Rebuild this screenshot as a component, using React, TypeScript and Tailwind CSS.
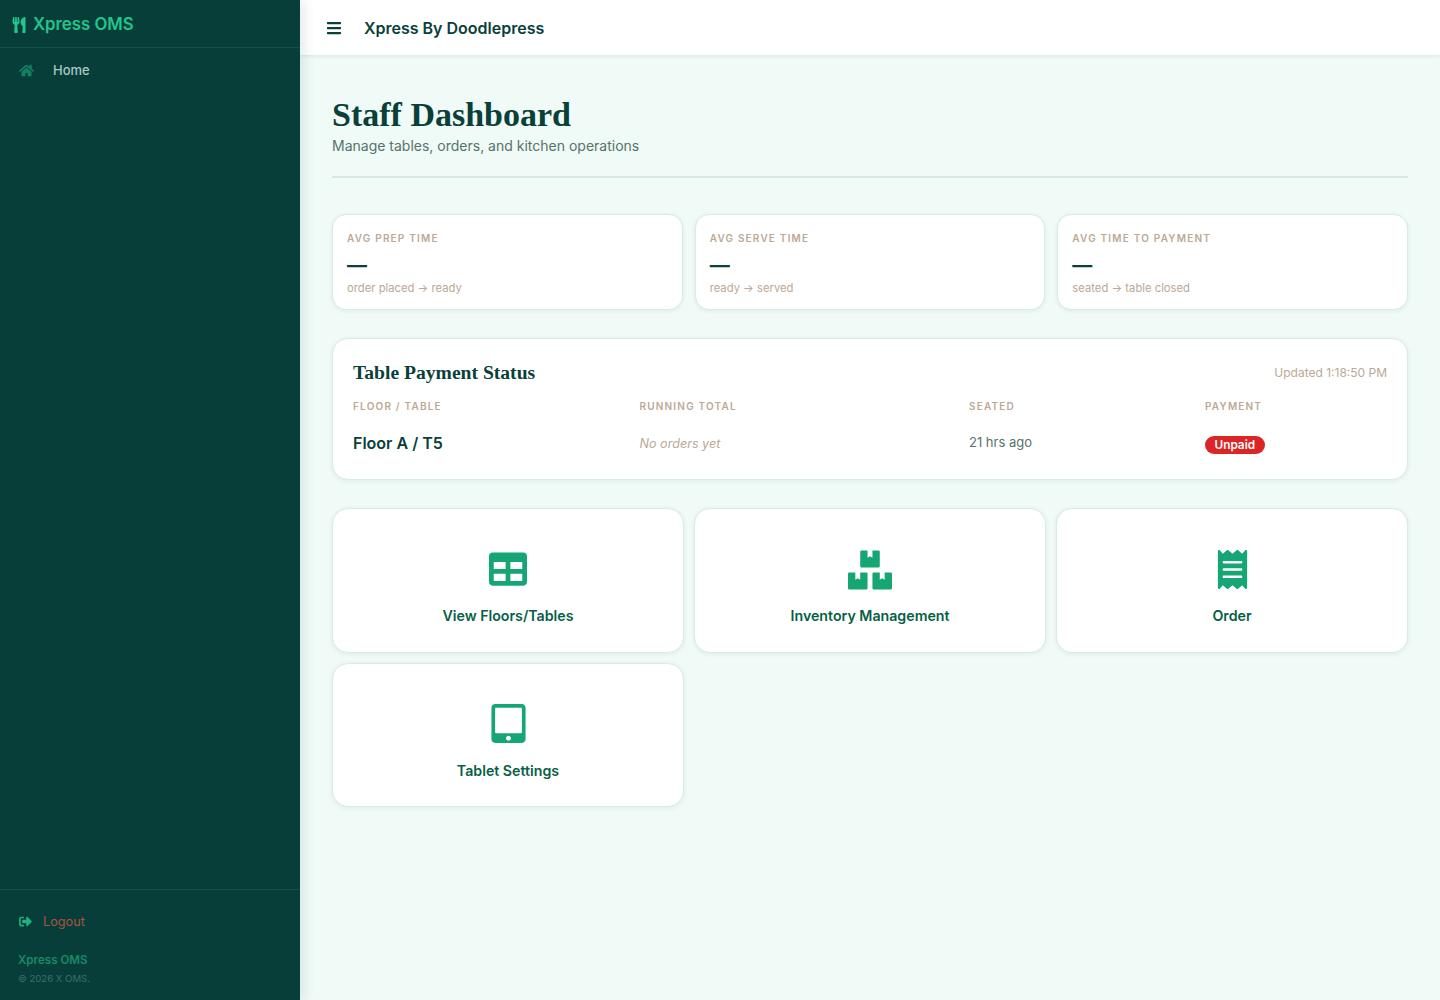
import { FaBars, FaBoxes, FaHome, FaReceipt, FaSignOutAlt, FaTable, FaTabletAlt, FaUtensils } from "react-icons/fa";
import type { IconType } from "react-icons";

type StatCardProps = {
  label: string;
  hint: string;
};

const StatCard = ({ label, hint }: StatCardProps) => (
  <div className="h-[96px] rounded-[14px] border border-[#d8ebe5] bg-white px-[14px] pt-[16px] shadow-[0_1px_4px_rgba(6,60,55,0.08)]">
    <div className="text-[10px] leading-[14px] font-semibold tracking-[1.2px] text-[#bca896] uppercase">{label}</div>
    <div className="mt-[8px] text-[20px] leading-[24px] font-bold text-[#0a403a]">—</div>
    <div className="mt-[3px] text-[11.25px] leading-[16px] text-[#bca896]">{hint}</div>
  </div>
);

type ActionCardProps = {
  icon: IconType;
  label: string;
  iconSize: number;
  iconClass?: string;
};

const ActionCard = ({ icon: Icon, label, iconSize, iconClass }: ActionCardProps) => (
  <div className="flex h-[144.5px] flex-col items-center rounded-[16px] border border-[#d8ebe5] bg-white shadow-[0_1px_5px_rgba(6,60,55,0.08)]">
    <div className="mt-[38px] flex h-[44px] items-center justify-center text-[#15a673]">
      <Icon size={iconSize} className={iconClass} />
    </div>
    <div className="mt-[15px] text-[14.2px] leading-[20px] font-semibold text-[#065f46]">{label}</div>
  </div>
);

export default function App() {
  return (
    <div className="flex min-h-[1000px] bg-[#f0faf6] font-['Inter',sans-serif]">
      <aside className="relative z-10 flex w-[300px] shrink-0 flex-col bg-[#083e3a] shadow-[3px_0_12px_rgba(6,60,55,0.12)]">
        <div className="flex h-[48px] items-center gap-[6.5px] border-b border-[#155049] pt-[2px] pl-[10.5px] text-[#22c58b]">
          <FaUtensils size={16} />
          <span className="text-[16.8px] font-semibold">Xpress OMS</span>
        </div>
        <div className="flex h-[45px] items-center pl-[19px]">
          <span className="w-[34px] text-[#15805f]">
            <FaHome size={15} />
          </span>
          <span className="text-[13px] font-medium text-[#a9c9c2]">Home</span>
        </div>
        <div className="mt-auto border-t border-[#155049] px-[18px] pt-[24px] pb-[14px]">
          <div className="flex h-[16px] items-center gap-[11px] pl-[1px]">
            <FaSignOutAlt size={13} className="mt-[-1px] text-[#22b07f]" />
            <span className="text-[12.7px] text-[#a9533f]">Logout</span>
          </div>
          <div className="mt-[22px] text-[11.6px] leading-[16px] font-semibold text-[#178a66]">Xpress OMS</div>
          <div className="mt-[4px] text-[9.6px] leading-[14px] text-[#3f6d67]">© 2026 X OMS.</div>
        </div>
      </aside>

      <div className="min-w-0 flex-1">
        <header className="flex h-[55px] items-center bg-white pl-[26px] shadow-[0_1px_4px_rgba(6,60,55,0.1)]">
          <FaBars size={16} className="text-[#0a403a]" />
          <span className="ml-[22px] text-[16px] font-semibold text-[#0a403a]">Xpress By Doodlepress</span>
        </header>

        <main className="px-[32px] pt-[38px]">
          <div className="border-b-2 border-[#d6e8e2] pb-[20px]">
            <h1 className="font-['Liberation_Serif',serif] text-[34px] leading-[44px] font-bold text-[#0a403a]">Staff Dashboard</h1>
            <p className="mt-[-1px] text-[14px] leading-[20px] text-[#56736d]">Manage tables, orders, and kitchen operations</p>
          </div>

          <div className="mt-[36px] grid grid-cols-3 gap-[12px]">
            <StatCard label="Avg Prep Time" hint="order placed → ready" />
            <StatCard label="Avg Serve Time" hint="ready → served" />
            <StatCard label="Avg Time to Payment" hint="seated → table closed" />
          </div>

          <section className="mt-[28px] h-[142px] rounded-[16px] border border-[#d8ebe5] bg-white px-[20px] pt-[20px] shadow-[0_1px_5px_rgba(6,60,55,0.08)]">
            <div className="flex items-center justify-between">
              <h2 className="font-['Liberation_Serif',serif] text-[19.6px] leading-[28px] font-bold text-[#0a403a]">Table Payment Status</h2>
              <span className="text-[12px] text-[#bca896]">Updated 1:18:50 PM</span>
            </div>
            <div className="mt-[12px] grid grid-cols-[286.5px_329.5px_236px_1fr] text-[10px] leading-[14px] font-semibold tracking-[1.2px] text-[#bca896] uppercase">
              <span>Floor / Table</span>
              <span>Running Total</span>
              <span>Seated</span>
              <span>Payment</span>
            </div>
            <div className="mt-[18px] grid grid-cols-[286.5px_329.5px_236px_1fr] items-center">
              <span className="text-[16px] leading-[22px] font-semibold text-[#0a403a]">Floor A / T5</span>
              <span className="mt-[2px] text-[12.6px] leading-[18px] text-[#bca896] italic">No orders yet</span>
              <span className="mt-[-2px] text-[13px] leading-[18px] text-[#56736d]">21 hrs ago</span>
              <span>
                <span className="inline-block rounded-full bg-[#dc2626] px-[9.5px] text-[11.8px] leading-[18px] font-semibold text-white">Unpaid</span>
              </span>
            </div>
          </section>

          <div className="mt-[28px] grid grid-cols-3 gap-[10px]">
            <ActionCard icon={FaTable} label="View Floors/Tables" iconSize={38} />
            <ActionCard icon={FaBoxes} label="Inventory Management" iconSize={44} iconClass="mt-[2px]" />
            <ActionCard icon={FaReceipt} label="Order" iconSize={39} iconClass="mt-[1px]" />
            <ActionCard icon={FaTabletAlt} label="Tablet Settings" iconSize={39} />
          </div>
        </main>
      </div>
    </div>
  );
}
